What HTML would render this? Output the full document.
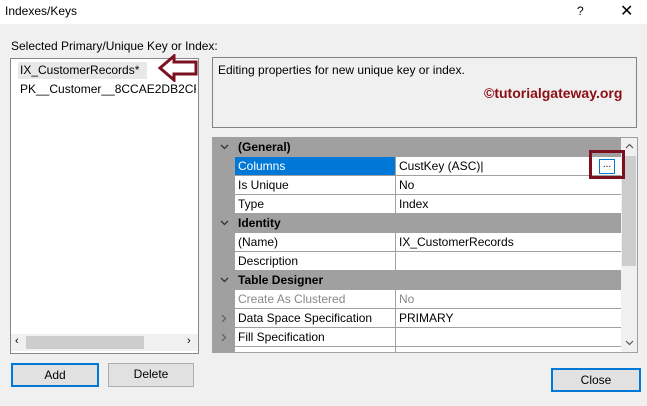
<!DOCTYPE html>
<html><head><style>
body{margin:0;width:647px;height:406px;background:#f0f0f0;font-family:"Liberation Sans",sans-serif;font-size:12px;color:#000;position:relative;overflow:hidden}
.a{position:absolute}
.title{left:0;top:0;width:647px;height:24px;background:#fff}
.btn{position:absolute;background:#e1e1e1;border:1px solid #adadad;text-align:center;line-height:21px;box-sizing:border-box}
.btn.d{border:2px solid #0078d7;line-height:20px}
.row{position:absolute;left:0;width:408px;height:19px;}
.gut{position:absolute;left:0;width:22px;height:19px;background:#a0a0a0}
.nm{position:absolute;left:22px;width:159px;height:18px;background:#fff;border-bottom:1px solid #a0a0a0;padding-left:3px;line-height:18px;box-sizing:content-box}
.vl{position:absolute;left:182px;width:225px;height:18px;background:#fff;border-bottom:1px solid #a0a0a0;border-left:1px solid #a0a0a0;padding-left:3px;line-height:18px}
.cat{position:absolute;left:0;width:408px;height:19px;background:#a0a0a0;font-weight:bold;line-height:19px}
.cat .t{position:absolute;left:25px}
.cat svg{position:absolute;left:7px;top:6px}
</style></head><body>
<div class="a title"></div>
<div class="a" style="left:5px;top:4px">Indexes/Keys</div>
<div class="a" style="left:577px;top:4px">?</div>
<div class="a" style="left:620px;top:1px;font-size:16px">✕</div>
<div class="a" style="left:11px;top:39px">Selected Primary/Unique Key or Index:</div>
<div class="a" style="left:10px;top:58px;width:187px;height:294px;background:#fff;border:1px solid #828790;overflow:hidden">
 <div class="a" style="left:7px;top:3px;width:129px;height:17px;background:#e8e8e8"></div>
 <div class="a" style="left:9px;top:4px">IX_CustomerRecords*</div>
 <div class="a" style="left:9px;top:23px;white-space:nowrap;width:176px;overflow:hidden">PK__Customer__8CCAE2DB2CF5F</div>
 <div class="a" style="left:0;top:275px;width:187px;height:17px;background:#f0f0f0"></div>
 <div class="a" style="left:15px;top:277px;width:118px;height:13px;background:#cdcdcd"></div>
 <div class="a" style="left:4px;top:276px;font-size:11px">‹</div>
 <div class="a" style="left:176px;top:276px;font-size:11px">›</div>
</div>
<svg class="a" style="left:158px;top:54px" width="42" height="28"><path d="M2 14 L16 2 L16 8 L38 8 L38 20 L16 20 L16 26 Z" fill="none" stroke="#7b1020" stroke-width="3"/></svg>
<div class="a" style="left:212px;top:57px;width:423px;height:69px;border:1px solid #828282;background:#f0f0f0"></div>
<div class="a" style="left:218px;top:63px">Editing properties for new unique key or index.</div>
<div class="a" style="left:484px;top:85px;color:#8b0e14;font-weight:bold;font-size:14px">©tutorialgateway.org</div>
<div class="a" style="left:212px;top:137px;width:424px;height:214px;border:1px solid #a0a0a0;background:#fff;overflow:hidden">
 <div class="cat" style="top:0"><svg width="9" height="6"><path d="M1 1 L4.5 4.5 L8 1" fill="none" stroke="#333" stroke-width="1.3"/></svg><span class="t">(General)</span></div>
 <div class="row" style="top:19px"><div class="gut"></div><div class="nm" style="background:#0078d7;color:#fff">Columns</div><div class="vl">CustKey (ASC)|<div class="a" style="left:203px;top:2px;width:14px;height:13px;border:1px solid #0078d7;font-size:10px;line-height:9px;text-align:center">...</div></div></div>
 <div class="row" style="top:38px"><div class="gut"></div><div class="nm">Is Unique</div><div class="vl">No</div></div>
 <div class="row" style="top:57px"><div class="gut"></div><div class="nm">Type</div><div class="vl">Index</div></div>
 <div class="cat" style="top:76px"><svg width="9" height="6"><path d="M1 1 L4.5 4.5 L8 1" fill="none" stroke="#333" stroke-width="1.3"/></svg><span class="t">Identity</span></div>
 <div class="row" style="top:95px"><div class="gut"></div><div class="nm">(Name)</div><div class="vl">IX_CustomerRecords</div></div>
 <div class="row" style="top:114px"><div class="gut"></div><div class="nm">Description</div><div class="vl"></div></div>
 <div class="cat" style="top:133px"><svg width="9" height="6"><path d="M1 1 L4.5 4.5 L8 1" fill="none" stroke="#333" stroke-width="1.3"/></svg><span class="t">Table Designer</span></div>
 <div class="row" style="top:152px"><div class="gut"></div><div class="nm" style="color:#888">Create As Clustered</div><div class="vl" style="color:#888">No</div></div>
 <div class="row" style="top:171px"><div class="gut"><svg class="a" style="left:8px;top:5px" width="6" height="9"><path d="M1 1 L4.5 4.5 L1 8" fill="none" stroke="#666" stroke-width="1.3"/></svg></div><div class="nm">Data Space Specification</div><div class="vl">PRIMARY</div></div>
 <div class="row" style="top:190px"><div class="gut"><svg class="a" style="left:8px;top:5px" width="6" height="9"><path d="M1 1 L4.5 4.5 L1 8" fill="none" stroke="#666" stroke-width="1.3"/></svg></div><div class="nm">Fill Specification</div><div class="vl"></div></div>
 <div class="row" style="top:209px"><div class="gut"></div><div class="nm"></div><div class="vl"></div></div>
 <div class="a" style="left:408px;top:0;width:16px;height:214px;background:#f0f0f0"></div>
 <div class="a" style="left:409px;top:18px;width:14px;height:110px;background:#cdcdcd"></div>
 <svg class="a" style="left:412px;top:5px" width="9" height="6"><path d="M1 5 L4.5 1.5 L8 5" fill="none" stroke="#555" stroke-width="1.2"/></svg>
 <svg class="a" style="left:412px;top:202px" width="9" height="6"><path d="M1 1 L4.5 4.5 L8 1" fill="none" stroke="#555" stroke-width="1.2"/></svg>
</div>
<div class="a" style="left:589px;top:150px;width:36px;height:29px;border:3px solid #7b1020;box-sizing:border-box"></div>
<div class="btn d" style="left:11px;top:363px;width:88px;height:24px">Add</div>
<div class="btn" style="left:108px;top:363px;width:86px;height:24px">Delete</div>
<div class="btn d" style="left:551px;top:368px;width:90px;height:24px">Close</div>
</body></html>
